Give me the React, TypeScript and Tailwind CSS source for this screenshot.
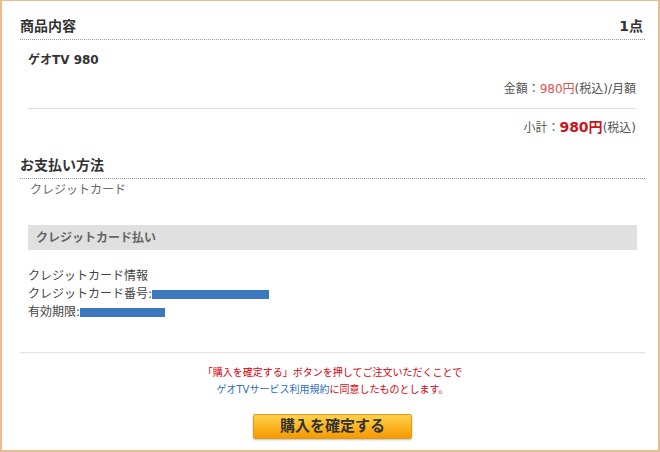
import React from 'react';

// ---------------------------------------------------------------------------
// Order confirmation panel (商品内容 / お支払い方法)
// ---------------------------------------------------------------------------

const FONT = { fontFamily: '"DejaVu Sans", "Noto Sans CJK JP", sans-serif' };

function SectionHeader({ title, right }: { title: string; right?: string }) {
  return (
    <div className="flex items-center justify-between border-b border-dotted border-[#999] pb-[3px] text-[14px] font-bold leading-[20px] text-[#333]">
      <span>{title}</span>
      {right && <span className="pr-[2px]">{right}</span>}
    </div>
  );
}

export default function App() {
  return (
    <div
      className="h-[452px] w-[660px] border-x-2 border-b-2 border-t border-[#eabb8c] bg-white pl-[18px] pr-[13px] text-[12px] text-[#555]"
      style={FONT}
    >
      {/* 商品内容 */}
      <div className="pt-[15px]">
        <SectionHeader title="商品内容" right="1点" />
      </div>

      <div className="mt-[11px] pl-[8px] font-bold leading-[18px] text-[#333]">ゲオTV 980</div>

      <div className="mt-[11px] pr-[9px] text-right leading-[18px] text-[#555]">
        金額：<span className="text-[#d9534f]">980円</span>(税込)/月額
      </div>

      <div className="mx-[8px] mt-[10px] border-b border-[#ddd]" />

      <div className="mt-[9px] pr-[9px] text-right leading-[18px] text-[#555]">
        小計：<span className="text-[14px] font-bold text-[#c8161d]">980円</span>(税込)
      </div>

      {/* お支払い方法 */}
      <div className="mt-[18px]">
        <SectionHeader title="お支払い方法" />
      </div>

      <div className="pl-[10px] pt-[2px] leading-[18px] text-[#666]">クレジットカード</div>

      <div className="mx-[8px] mt-[26px] flex h-[25px] items-center bg-[#e0e0e0] pl-[8px] font-bold text-[#666]">
        クレジットカード払い
      </div>

      <div className="mt-[17px] pl-[8px] leading-[18px] text-[#444]">
        <div>クレジットカード情報</div>
        <div className="flex items-center">
          <span>クレジットカード番号:</span>
          <span className="inline-block h-[9px] w-[117px] bg-[#3d77bd]" />
        </div>
        <div className="flex items-center">
          <span>有効期限:</span>
          <span className="inline-block h-[9px] w-[85px] bg-[#3d77bd]" />
        </div>
      </div>

      <div className="mt-[31px] border-b border-[#e2e2e2] shadow-[0_1px_1px_rgba(0,0,0,0.04)]" />

      {/* 注意書き */}
      <div className="mt-[11px] text-center text-[10px] leading-[17px] text-[#d8000c]">
        <div>「購入を確定する」ボタンを押してご注文いただくことで</div>
        <div>
          <span className="text-[#2e6fb5]">ゲオTVサービス利用規約</span>に同意したものとします。
        </div>
      </div>

      <div className="mt-[16px] flex justify-center">
        <button className="h-[25px] w-[159px] rounded-[2px] border border-[#e39a12] bg-gradient-to-b from-[#ffd24d] via-[#fbb51f] to-[#f39a00] text-[15px] font-bold leading-none text-[#333] shadow-[0_1px_2px_rgba(0,0,0,0.25)]">
          購入を確定する
        </button>
      </div>
    </div>
  );
}
